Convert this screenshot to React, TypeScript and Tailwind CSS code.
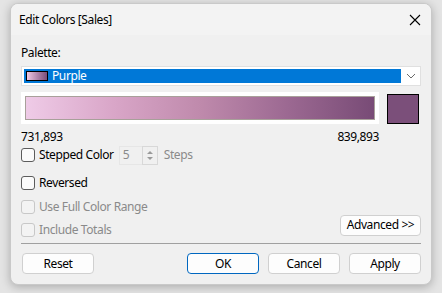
import React from 'react';

const Check: React.FC<{ label: string; disabled?: boolean }> = ({ label, disabled }) => (
  <label className={`flex items-center gap-[4px] ${disabled ? 'text-[#8a8a8a]' : 'text-black'}`}>
    <span
      className={`w-[14px] h-[14px] rounded-[3px] border ${disabled ? 'border-[#c8c8c8] bg-[#f3f3f3]' : 'border-[#5c5c5c] bg-[#fbfbfb]'}`}
    ></span>
    <span>{label}</span>
  </label>
);

const Btn: React.FC<{ label: string; primary?: boolean }> = ({ label, primary }) => (
  <button
    className={`w-[72px] h-[21px] rounded-[4px] bg-[#fdfdfd] text-[12px] text-black flex items-center justify-center ${primary ? 'border border-[#0067c0]' : 'border border-[#d0d0d0]'}`}
  >
    {label}
  </button>
);

export default function App() {
  return (
    <div className="w-[442px] h-[293px] bg-[#e4e4e4] pl-[10px] pt-[3px] overflow-hidden" style={{ fontFamily: '"Noto Sans", sans-serif' }}>
      <div className="w-[422px] h-[282px] rounded-[8px] border border-[#c9c9c9] bg-[#f0f0f0] shadow-[0_2px_10px_rgba(0,0,0,0.25)] overflow-hidden flex flex-col text-[12px] tracking-[-0.4px]">
        {/* title bar */}
        <div className="h-[31px] bg-[#f3f3f3] flex items-center justify-between pl-[8px] pr-[10px] pt-[1px]">
          <span className="text-[12px] text-black">Edit Colors [Sales]</span>
          <svg width="12" height="12" viewBox="0 0 12 12" className="text-black">
            <path d="M1 1 L11 11 M11 1 L1 11" stroke="currentColor" strokeWidth="1.1" />
          </svg>
        </div>

        <div className="flex-1 px-[10px] pt-[10px] flex flex-col">
          <div className="leading-[16px]">Palette:</div>
          {/* dropdown */}
          <div className="mt-[5px] h-[20px] w-[400px] bg-white border border-[#e0e0e0] flex items-center pl-[2px]">
            <div className="w-[377px] h-[14px] bg-[#0078d7] flex items-center pl-[2px] gap-[4px] text-white">
              <span className="w-[22px] h-[10px] border border-black bg-gradient-to-r from-[#efc8e4] to-[#7b4e7a]"></span>
              <span className="leading-none">Purple</span>
            </div>
            <div className="flex-1 flex justify-center">
              <svg width="10" height="6" viewBox="0 0 10 6">
                <path d="M1 1 L5 5 L9 1" stroke="#6b6b6b" strokeWidth="1" fill="none" />
              </svg>
            </div>
          </div>

          {/* gradient */}
          <div className="mt-[6px] flex items-start">
            <div className="w-[358px] h-[32px] bg-white p-[4px]">
              <div className="w-full h-full border border-[#a8a09a] bg-[linear-gradient(to_right,#efcbe7,#d9a6c8_25%,#bf8aac_50%,#9c6992_75%,#784b76)]"></div>
            </div>
            <div className="ml-[8px] mt-[2px] w-[32px] h-[30px] border border-black bg-[#7b4f7a]"></div>
          </div>

          <div className="w-[358px] flex justify-between mt-[5px] leading-[16px]">
            <span>731,893</span>
            <span>839,893</span>
          </div>

          {/* stepped */}
          <div className="flex items-center h-[20px]">
            <Check label="Stepped Color" />
            <div className="ml-[5px] flex items-center text-[#8a8a8a]">
              <div className="w-[23px] h-[19px] flex items-center pl-[3px] border border-r-0 border-[#e6e6e6]">5</div>
              <div className="w-[16px] h-[19px] border border-[#d8d8d8] bg-[#f0f0f0] flex flex-col items-center justify-center gap-[3px]">
                <svg width="6" height="3" viewBox="0 0 6 3"><path d="M0 3 L3 0 L6 3 Z" fill="#9a9a9a" /></svg>
                <svg width="6" height="3" viewBox="0 0 6 3"><path d="M0 0 L3 3 L6 0 Z" fill="#9a9a9a" /></svg>
              </div>
              <span className="ml-[6px]">Steps</span>
            </div>
          </div>

          <div className="mt-[9px] h-[18px] flex items-center"><Check label="Reversed" /></div>
          <div className="mt-[6px] h-[18px] flex items-center"><Check label="Use Full Color Range" disabled /></div>
          <div className="mt-[5px] h-[18px] flex items-center justify-between">
            <Check label="Include Totals" disabled />
            <div className="-mt-[10px] w-[81px] h-[21px] rounded-[4px] border border-[#d0d0d0] bg-[#fdfdfd] flex items-center justify-center">Advanced &gt;&gt;</div>
          </div>

          <div className="mt-[4px] h-px w-[400px] bg-[#a0a0a0]"></div>

          <div className="mt-[9px] w-[399px] flex items-center ml-[1px]">
            <Btn label="Reset" />
            <div className="flex-1"></div>
            <div className="flex gap-[9px]">
              <Btn label="OK" primary />
              <Btn label="Cancel" />
              <Btn label="Apply" />
            </div>
          </div>
        </div>
      </div>
    </div>
  );
}
